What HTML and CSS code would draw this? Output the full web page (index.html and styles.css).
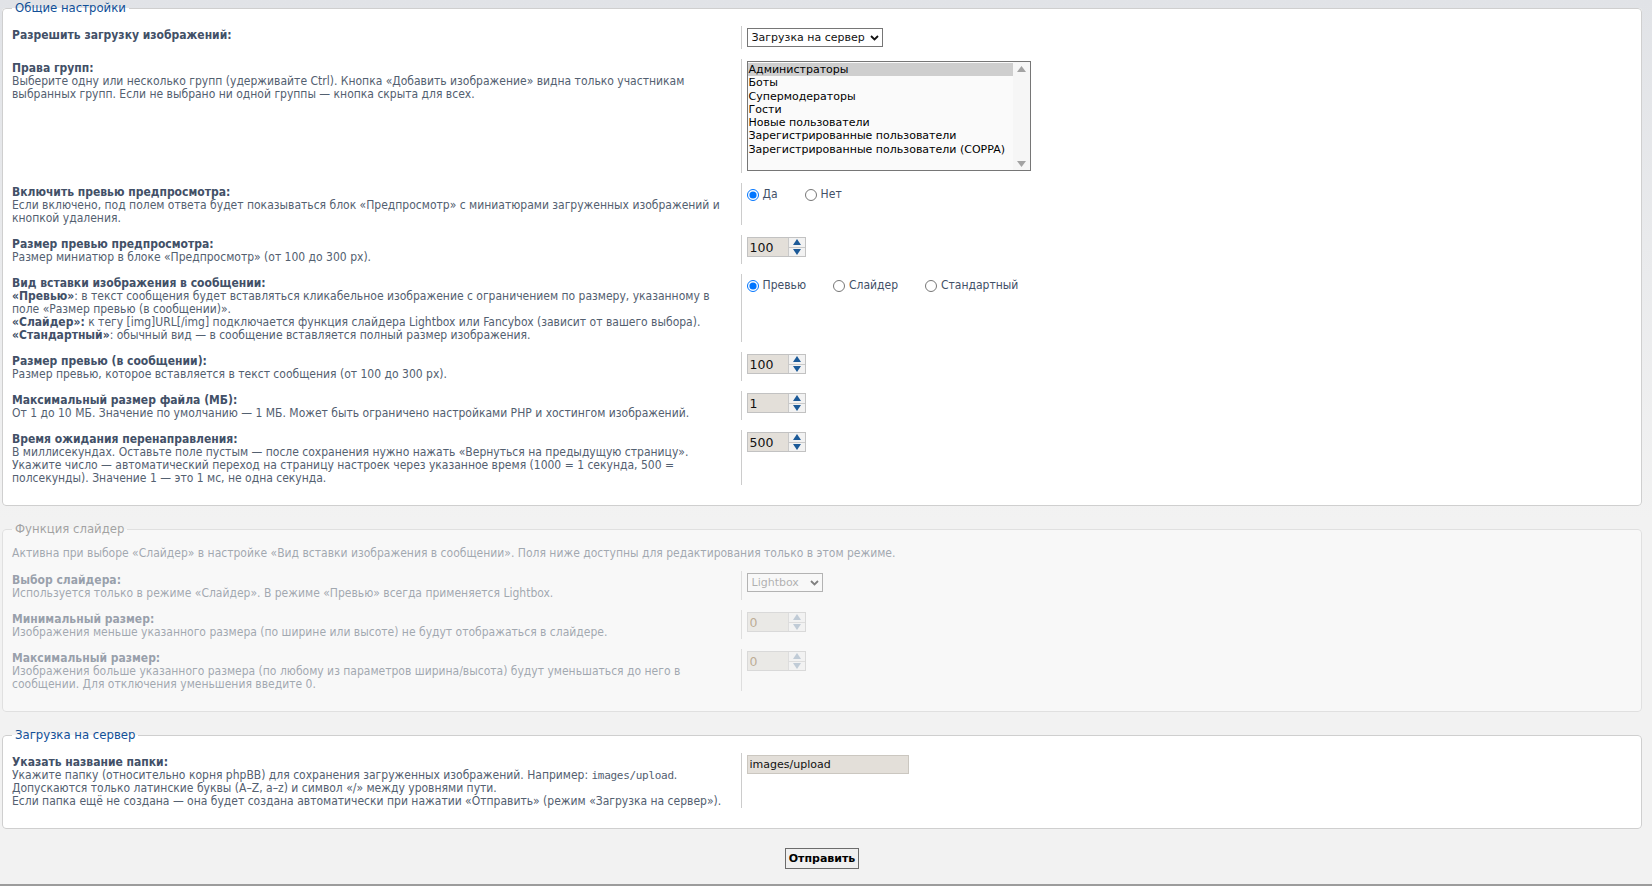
FILE: index.html
```html
<!DOCTYPE html>
<html lang="ru">
  <head>
    <meta charset="UTF-8" />
    <meta name="viewport" content="width=device-width, initial-scale=1.0" />
    <link rel="stylesheet" href="styles.css">
    <title>Настройки загрузки изображений</title>
  </head>
  <body>
    <div class="page">
      <form class="acp-form" onsubmit="return false">
        <fieldset class="panel">
          <legend>Общие настройки</legend>
          <dl class="row">
            <dt><label for="upload_mode">Разрешить загрузку изображений:</label></dt>
            <dd>
              <div class="select-box">
                <select id="upload_mode">
                  <option>Загрузка на сервер</option>
                  <option>Хостинг изображений</option>
                  <option>Отключено</option>
                </select>
                <svg class="chevron" width="9" height="6" viewBox="0 0 9 6"><path d="M1 1l3.5 3.5L8 1" fill="none" stroke="#111" stroke-width="1.8"/></svg>
              </div>
            </dd>
          </dl>
          <dl class="row">
            <dt>
              <label>Права групп:</label>
              <span class="explain">Выберите одну или несколько групп (удерживайте Ctrl). Кнопка «Добавить изображение» видна только участникам выбранных групп. Если не выбрано ни одной группы — кнопка скрыта для всех.</span>
            </dt>
            <dd>
              <div class="listbox" role="listbox">
                <div class="listbox-items">
                  <div class="opt is-selected">Администраторы</div>
                  <div class="opt">Боты</div>
                  <div class="opt">Супермодераторы</div>
                  <div class="opt">Гости</div>
                  <div class="opt">Новые пользователи</div>
                  <div class="opt">Зарегистрированные пользователи</div>
                  <div class="opt">Зарегистрированные пользователи (COPPA)</div>
                </div>
                <div class="listbox-bar">
                  <svg width="9" height="6" viewBox="0 0 9 6"><path d="M0 6L4.5 0L9 6z" fill="#a3a3a3"/></svg>
                  <svg width="9" height="6" viewBox="0 0 9 6"><path d="M0 0L4.5 6L9 0z" fill="#a3a3a3"/></svg>
                </div>
              </div>
            </dd>
          </dl>
          <dl class="row">
            <dt>
              <label>Включить превью предпросмотра:</label>
              <span class="explain">Если включено, под полем ответа будет показываться блок «Предпросмотр» с миниатюрами загруженных изображений и кнопкой удаления.</span>
            </dt>
            <dd class="radios">
              <label><input type="radio" name="preview_on" checked /> Да</label>
              <label><input type="radio" name="preview_on" /> Нет</label>
            </dd>
          </dl>
          <dl class="row">
            <dt>
              <label>Размер превью предпросмотра:</label>
              <span class="explain">Размер миниатюр в блоке «Предпросмотр» (от 100 до 300 px).</span>
            </dt>
            <dd>
              <span class="spin"><input class="num" type="text" value="100" /><span class="spin-btns"><span class="spin-up"><svg width="8" height="6" viewBox="0 0 8 6"><path d="M0 6L4 0L8 6z"/></svg></span><span class="spin-down"><svg width="8" height="6" viewBox="0 0 8 6"><path d="M0 0L4 6L8 0z"/></svg></span></span></span>
            </dd>
          </dl>
          <dl class="row">
            <dt>
              <label>Вид вставки изображения в сообщении:</label>
              <span class="explain"><b>«Превью»</b>: в текст сообщения будет вставляться кликабельное изображение с ограничением по размеру, указанному в поле «Размер превью (в сообщении)».<br>
              <b>«Слайдер»:</b> к тегу [img]URL[/img] подключается функция слайдера Lightbox или Fancybox (зависит от вашего выбора).<br>
              <b>«Стандартный»</b>: обычный вид — в сообщение вставляется полный размер изображения.</span>
            </dt>
            <dd class="radios">
              <label><input type="radio" name="insert_mode" checked /> Превью</label>
              <label><input type="radio" name="insert_mode" /> Слайдер</label>
              <label><input type="radio" name="insert_mode" /> Стандартный</label>
            </dd>
          </dl>
          <dl class="row">
            <dt>
              <label>Размер превью (в сообщении):</label>
              <span class="explain">Размер превью, которое вставляется в текст сообщения (от 100 до 300 px).</span>
            </dt>
            <dd>
              <span class="spin"><input class="num" type="text" value="100" /><span class="spin-btns"><span class="spin-up"><svg width="8" height="6" viewBox="0 0 8 6"><path d="M0 6L4 0L8 6z"/></svg></span><span class="spin-down"><svg width="8" height="6" viewBox="0 0 8 6"><path d="M0 0L4 6L8 0z"/></svg></span></span></span>
            </dd>
          </dl>
          <dl class="row">
            <dt>
              <label>Максимальный размер файла (МБ):</label>
              <span class="explain">От 1 до 10 МБ. Значение по умолчанию — 1 МБ. Может быть ограничено настройками PHP и хостингом изображений.</span>
            </dt>
            <dd>
              <span class="spin"><input class="num" type="text" value="1" /><span class="spin-btns"><span class="spin-up"><svg width="8" height="6" viewBox="0 0 8 6"><path d="M0 6L4 0L8 6z"/></svg></span><span class="spin-down"><svg width="8" height="6" viewBox="0 0 8 6"><path d="M0 0L4 6L8 0z"/></svg></span></span></span>
            </dd>
          </dl>
          <dl class="row">
            <dt>
              <label>Время ожидания перенаправления:</label>
              <span class="explain">В миллисекундах. Оставьте поле пустым — после сохранения нужно нажать «Вернуться на предыдущую страницу».<br>
              Укажите число — автоматический переход на страницу настроек через указанное время (1000 = 1 секунда, 500 = полсекунды). Значение 1 — это 1 мс, не одна секунда.</span>
            </dt>
            <dd>
              <span class="spin"><input class="num" type="text" value="500" /><span class="spin-btns"><span class="spin-up"><svg width="8" height="6" viewBox="0 0 8 6"><path d="M0 6L4 0L8 6z"/></svg></span><span class="spin-down"><svg width="8" height="6" viewBox="0 0 8 6"><path d="M0 0L4 6L8 0z"/></svg></span></span></span>
            </dd>
          </dl>
        </fieldset>

        <fieldset class="panel is-disabled">
          <legend>Функция слайдер</legend>
          <p class="intro">Активна при выборе «Слайдер» в настройке «Вид вставки изображения в сообщении». Поля ниже доступны для редактирования только в этом режиме.</p>
          <dl class="row">
            <dt>
              <label>Выбор слайдера:</label>
              <span class="explain">Используется только в режиме «Слайдер». В режиме «Превью» всегда применяется Lightbox.</span>
            </dt>
            <dd>
              <div class="select-box select-small">
                <select disabled>
                  <option>Lightbox</option>
                  <option>Fancybox</option>
                </select>
                <svg class="chevron" width="9" height="6" viewBox="0 0 9 6"><path d="M1 1l3.5 3.5L8 1" fill="none" stroke="#111" stroke-width="1.8"/></svg>
              </div>
            </dd>
          </dl>
          <dl class="row">
            <dt>
              <label>Минимальный размер:</label>
              <span class="explain">Изображения меньше указанного размера (по ширине или высоте) не будут отображаться в слайдере.</span>
            </dt>
            <dd>
              <span class="spin"><input class="num" type="text" value="0" disabled /><span class="spin-btns"><span class="spin-up"><svg width="8" height="6" viewBox="0 0 8 6"><path d="M0 6L4 0L8 6z"/></svg></span><span class="spin-down"><svg width="8" height="6" viewBox="0 0 8 6"><path d="M0 0L4 6L8 0z"/></svg></span></span></span>
            </dd>
          </dl>
          <dl class="row">
            <dt>
              <label>Максимальный размер:</label>
              <span class="explain">Изображения больше указанного размера (по любому из параметров ширина/высота) будут уменьшаться до него в сообщении. Для отключения уменьшения введите 0.</span>
            </dt>
            <dd>
              <span class="spin"><input class="num" type="text" value="0" disabled /><span class="spin-btns"><span class="spin-up"><svg width="8" height="6" viewBox="0 0 8 6"><path d="M0 6L4 0L8 6z"/></svg></span><span class="spin-down"><svg width="8" height="6" viewBox="0 0 8 6"><path d="M0 0L4 6L8 0z"/></svg></span></span></span>
            </dd>
          </dl>
        </fieldset>

        <fieldset class="panel">
          <legend>Загрузка на сервер</legend>
          <dl class="row">
            <dt>
              <label>Указать название папки:</label>
              <span class="explain">Укажите папку (относительно корня phpBB) для сохранения загруженных изображений. Например: <code>images/upload</code>.<br>
              Допускаются только латинские буквы (A–Z, a–z) и символ «/» между уровнями пути.<br>
              Если папка ещё не создана — она будет создана автоматически при нажатии «Отправить» (режим «Загрузка на сервер»).</span>
            </dt>
            <dd>
              <input class="text" type="text" value="images/upload" />
            </dd>
          </dl>
        </fieldset>

        <div class="submit-bar">
          <button type="submit" class="button">Отправить</button>
        </div>
      </form>
    </div>
  </body>
</html>
```

FILE: styles.css
```css
html,
body {
  margin: 0;
  padding: 0;
}
body {
  background: #f2f2f2 linear-gradient(to bottom, #e1e3e7 0, #f2f2f2 520px) no-repeat;
  font-family: "DejaVu Sans Condensed", "Liberation Sans Narrow", "DejaVu Sans", sans-serif;
  font-stretch: condensed;
  font-size: 12px;
  line-height: 13px;
  color: #536070;
}
.page {
  box-sizing: border-box;
  height: 886px;
  padding: 0 10px 0 2px;
  border-bottom: 2px solid #9c9c9c;
}
.panel {
  margin: 0 0 15px;
  padding: 10px 10px 10px 9px;
  background: #ffffff;
  border: 1px solid #cfcfcf;
  border-radius: 4px;
  min-width: 0;
}
.panel legend {
  padding: 0 3px;
  font-size: 13px;
  line-height: 16px;
  color: #115098;
}
.panel.is-disabled {
  opacity: 0.5;
}
.panel.is-disabled legend {
  color: #555555;
}
.intro {
  margin: 0 0 11px;
  padding-left: 0;
}
.row {
  display: grid;
  grid-template-columns: 45% 1fr;
  margin: 0 0 10px;
}
.row dt {
  padding: 3px 14px 0 0;
}
.row dt label {
  display: block;
  font-weight: bold;
  color: #425067;
}
.row dt .explain {
  display: block;
}
.row dt b {
  color: #425067;
}
.row dt code {
  font-family: "DejaVu Sans Mono", monospace;
  font-size: 11px;
  letter-spacing: -0.3px;
}
.row dd {
  margin: 0;
  padding: 2px 0 2px 5px;
  border-left: 1px solid #cccccc;
}

/* select with a drawn chevron */
.select-box {
  display: inline-flex;
  align-items: center;
  box-sizing: border-box;
  width: 136px;
  height: 19px;
  background: #ffffff;
  border: 1px solid #767676;
  vertical-align: top;
}
.select-box select {
  -webkit-appearance: none;
  appearance: none;
  flex: 1;
  min-width: 0;
  height: 17px;
  margin: 0;
  padding: 0 0 0 4px;
  border: 0;
  background: transparent;
  font-family: "DejaVu Sans", sans-serif;
  font-stretch: normal;
  font-size: 11px;
  color: #111111;
  outline: none;
}
.select-box .chevron {
  flex: 0 0 9px;
  margin-right: 3px;
}
.select-small {
  width: 76px;
}
.select-small select {
  color: #333333;
}

/* multi-select group list */
.listbox {
  display: flex;
  box-sizing: border-box;
  width: 284px;
  height: 110px;
  background: #fafafa;
  border: 1px solid #767676;
  font-family: "DejaVu Sans", sans-serif;
  font-stretch: normal;
  font-size: 11px;
  line-height: 13.3px;
  color: #000000;
}
.listbox-items {
  flex: 1;
  padding-top: 1px;
}
.listbox-items .opt {
  padding-left: 1px;
  white-space: nowrap;
}
.listbox-items .opt.is-selected {
  background: #cecece;
}
.listbox-bar {
  display: flex;
  flex-direction: column;
  justify-content: space-between;
  align-items: center;
  flex: 0 0 17px;
  padding: 4px 0 3px;
  background: #f6f6f6;
}

/* radio groups */
.radios {
  display: flex;
  align-items: flex-start;
}
.radios label {
  display: inline-flex;
  align-items: center;
  margin-right: 27px;
  color: #425067;
  padding-top: 3px;
}
.radios input {
  width: 12px;
  height: 12px;
  margin: 0 4px 0 0;
}

/* number field with spin buttons */
.spin {
  display: inline-flex;
  box-sizing: border-box;
  height: 20px;
  border: 1px solid #c2c2c2;
  vertical-align: top;
}
.spin .num {
  box-sizing: border-box;
  width: 41px;
  height: 18px;
  margin: 0;
  padding: 0 0 0 2px;
  border: 0;
  border-right: 1px solid #c9c9c9;
  background: #e3dfd9;
  font-family: "DejaVu Sans", sans-serif;
  font-stretch: normal;
  font-size: 12.5px;
  color: #111111;
  outline: none;
}
.spin .num:disabled {
  color: #8a6a3a;
  background: #e3e1dc;
}
.spin-btns {
  display: flex;
  flex-direction: column;
  width: 16px;
  background: #f2f2f2;
}
.spin-btns span {
  flex: 1;
  display: flex;
  align-items: center;
  justify-content: center;
}
.spin-btns svg {
  fill: #1c5a98;
}
.spin-up {
  border-bottom: 1px solid #c9c9c9;
}
.is-disabled .spin-btns svg {
  fill: #8fa6bc;
}

.text {
  box-sizing: border-box;
  width: 162px;
  height: 19px;
  margin: 0;
  padding: 0 2px;
  border: 1px solid #cbc7c0;
  background: #e3dfd9;
  font-family: "DejaVu Sans", sans-serif;
  font-stretch: normal;
  font-size: 11px;
  color: #111111;
  outline: none;
}

.submit-bar {
  padding-top: 4px;
  text-align: center;
}
.button {
  height: 21px;
  margin: 0;
  padding: 0 3px;
  border: 1px solid #6c6c6c;
  background: #f0f0f0;
  font-family: "DejaVu Sans", sans-serif;
  font-stretch: normal;
  font-size: 11px;
  font-weight: bold;
  color: #000000;
}
```
